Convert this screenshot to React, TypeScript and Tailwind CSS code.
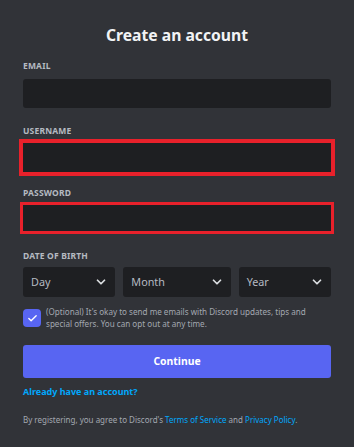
import { ChevronDown, Check } from 'lucide-react'

function Label({ children, className = '' }: { children: string; className?: string }) {
  return (
    <div className={`h-[12px] text-[8.5px] font-bold uppercase leading-[12px] tracking-[0.02em] text-[#b5bac1] ${className}`}>
      {children}
    </div>
  )
}

function Select({ label }: { label: string }) {
  return (
    <div className="flex h-[30px] items-center justify-between rounded-[3px] bg-[#1e1f22] pl-[8px] pr-[7px] text-[10.8px] text-[#b5bac1]">
      <span>{label}</span>
      <ChevronDown className="h-[14px] w-[14px] text-[#dbdee1]" strokeWidth={3} />
    </div>
  )
}

export default function App() {
  return (
    <div
      className="h-[447px] w-[354px] overflow-hidden bg-[#313338] px-[23px] pt-[23px]"
      style={{ fontFamily: '"Noto Sans", "Open Sans", sans-serif' }}
    >
      <h1 className="h-[24px] text-center text-[15.7px] font-bold leading-[24px] text-[#f2f3f5]">
        Create an account
      </h1>

      <Label className="mt-[13px]">Email</Label>
      <div className="mt-[7px] h-[29px] rounded-[3px] bg-[#1e1f22]" />

      <Label className="mt-[17px]">Username</Label>
      <div className="mt-[6px] h-[29px] bg-[#1e1f22] outline-[4px] outline-[#e8212b] outline-solid" />

      <Label className="mt-[15px]">Password</Label>
      <div className="mt-[6px] h-[26px] bg-[#1e1f22] outline-[3px] outline-[#e8212b] outline-solid" />

      <Label className="mt-[19px]">Date of birth</Label>
      <div className="mt-[5px] grid grid-cols-[93fr_108fr_93fr] gap-[8px]">
        <Select label="Day" />
        <Select label="Month" />
        <Select label="Year" />
      </div>

      <div className="mt-[9px] flex items-center gap-[5px]">
        <div className="flex h-[18px] w-[18px] shrink-0 items-center justify-center rounded-[4px] bg-[#5865f2]">
          <Check className="h-[11px] w-[11px] text-white" strokeWidth={3} />
        </div>
        <p className="text-[8.1px] leading-[12px] text-[#a3a8b0]">
          (Optional) It's okay to send me emails with Discord updates, tips and
          <br />
          special offers. You can opt out at any time.
        </p>
      </div>

      <button className="mt-[15px] flex h-[33px] w-full items-center justify-center rounded-[3px] bg-[#5865f2] text-[10.4px] font-bold text-white">
        Continue
      </button>

      <div className="mt-[8px] h-[12px] text-[9px] font-bold leading-[12px] text-[#00a8fc]">
        Already have an account?
      </div>

      <p className="mt-[16px] text-[8px] leading-[12px] text-[#a3a8b0]">
        By registering, you agree to Discord's <span className="text-[#00a8fc]">Terms of Service</span> and{' '}
        <span className="text-[#00a8fc]">Privacy Policy</span>.
      </p>
    </div>
  )
}
